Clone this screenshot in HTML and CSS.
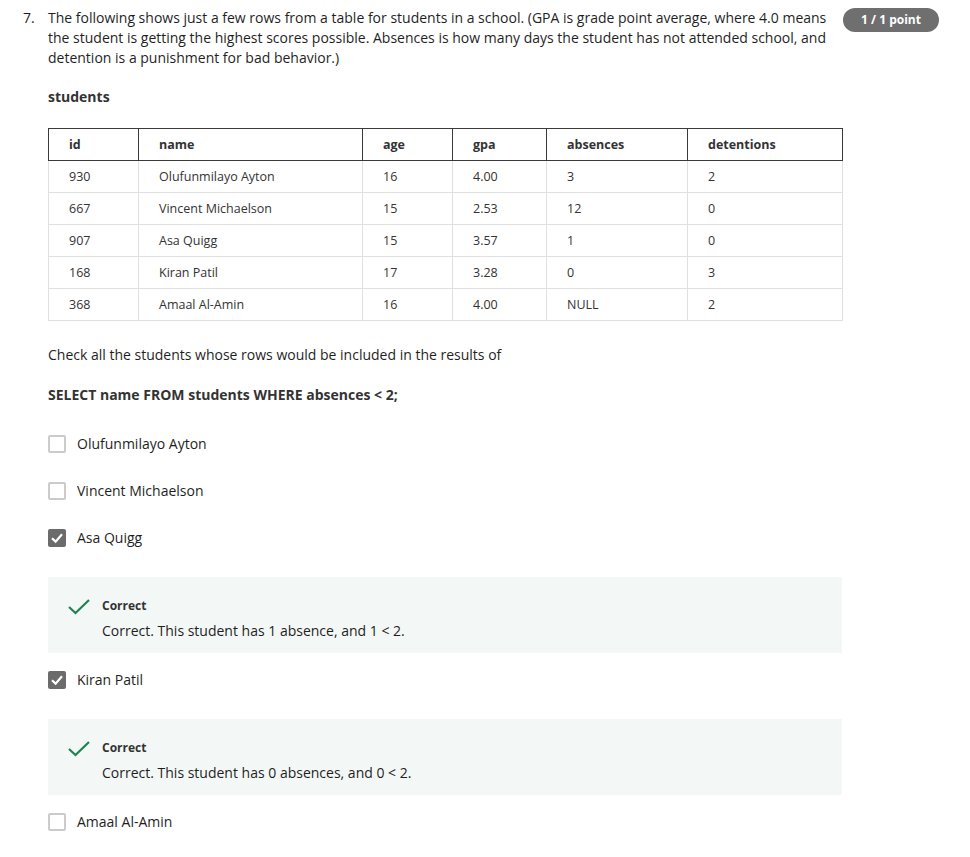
FILE: index.html
```html
<!DOCTYPE html>
<html lang="en">
<head>
<meta charset="utf-8">
<title>Question 7</title>
<link rel="stylesheet" href="styles.css">
</head>
<body>
<div class="page">
  <div class="num">7.</div>
  <div class="main">
    <p class="prompt">The following shows just a few rows from a table for students in a school. (GPA is grade point average, where 4.0 means the student is getting the highest scores possible. Absences is how many days the student has not attended school, and detention is a punishment for bad behavior.)</p>
    <p class="caption">students</p>
    <table class="data">
      <colgroup>
        <col class="c-id"><col class="c-name"><col class="c-age"><col class="c-gpa"><col class="c-abs"><col class="c-det">
      </colgroup>
      <thead>
        <tr><th>id</th><th>name</th><th>age</th><th>gpa</th><th>absences</th><th>detentions</th></tr>
      </thead>
      <tbody>
        <tr><td>930</td><td>Olufunmilayo Ayton</td><td>16</td><td>4.00</td><td>3</td><td>2</td></tr>
        <tr><td>667</td><td>Vincent Michaelson</td><td>15</td><td>2.53</td><td>12</td><td>0</td></tr>
        <tr><td>907</td><td>Asa Quigg</td><td>15</td><td>3.57</td><td>1</td><td>0</td></tr>
        <tr><td>168</td><td>Kiran Patil</td><td>17</td><td>3.28</td><td>0</td><td>3</td></tr>
        <tr><td>368</td><td>Amaal Al-Amin</td><td>16</td><td>4.00</td><td>NULL</td><td>2</td></tr>
      </tbody>
    </table>
    <p class="instr">Check all the students whose rows would be included in the results of</p>
    <p class="sql">SELECT name FROM students WHERE absences &lt; 2;</p>

    <div class="options">
      <div class="opt"><span class="box"></span><span>Olufunmilayo Ayton</span></div>
      <div class="opt"><span class="box"></span><span>Vincent Michaelson</span></div>
      <div class="opt"><span class="box checked"><svg viewBox="0 0 18 18" width="18" height="18"><polyline points="4,9.2 7.6,12.6 14,5.2" fill="none" stroke="#fff" stroke-width="2.2"/></svg></span><span>Asa Quigg</span></div>
      <div class="feedback">
        <svg class="tick" viewBox="0 0 22 16" width="22" height="16"><polyline points="1,8 7.5,14 21,1" fill="none" stroke="#1f8354" stroke-width="2.2"/></svg>
        <div class="fb-body">
          <div class="fb-title">Correct</div>
          <div class="fb-text">Correct. This student has 1 absence, and 1 &lt; 2.</div>
        </div>
      </div>
      <div class="opt after-fb"><span class="box checked"><svg viewBox="0 0 18 18" width="18" height="18"><polyline points="4,9.2 7.6,12.6 14,5.2" fill="none" stroke="#fff" stroke-width="2.2"/></svg></span><span>Kiran Patil</span></div>
      <div class="feedback">
        <svg class="tick" viewBox="0 0 22 16" width="22" height="16"><polyline points="1,8 7.5,14 21,1" fill="none" stroke="#1f8354" stroke-width="2.2"/></svg>
        <div class="fb-body">
          <div class="fb-title">Correct</div>
          <div class="fb-text">Correct. This student has 0 absences, and 0 &lt; 2.</div>
        </div>
      </div>
      <div class="opt after-fb"><span class="box"></span><span>Amaal Al-Amin</span></div>
    </div>
  </div>
  <div class="badge">1 / 1 point</div>
</div>
</body>
</html>
```

FILE: styles.css
```css
html, body {
  margin: 0;
  padding: 0;
  background: #fff;
}
body {
  font-family: "Open Sans", "Noto Sans", sans-serif;
  font-size: 14px;
  line-height: 20px;
  color: #1f1f1f;
}
.page {
  display: flex;
  align-items: flex-start;
  padding: 8px 0 0 23px;
}
.num {
  width: 25px;
  flex: none;
}
.main {
  width: 794px;
  flex: none;
}
.badge {
  flex: none;
  margin-left: 1px;
  width: 96px;
  height: 24px;
  line-height: 24px;
  border-radius: 12px;
  background: #6f6f6f;
  color: #fff;
  font-size: 12px;
  font-weight: 700;
  text-align: center;
}
p {
  margin: 0;
}
.caption {
  margin-top: 19px;
  font-weight: 700;
  color: #333;
}
.data {
  margin-top: 21px;
  width: 795px;
  border-collapse: collapse;
  table-layout: fixed;
  font-size: 12.5px;
  line-height: 17px;
  color: #333;
}
.c-id { width: 90px; }
.c-name { width: 224px; }
.c-age { width: 90px; }
.c-gpa { width: 94px; }
.c-abs { width: 141px; }
.c-det { width: 155px; }
.data th, .data td {
  padding: 7px 20px;
  text-align: left;
  white-space: nowrap;
}
.data th {
  border: 1px solid #3a3a3a;
  font-weight: 700;
}
.data td {
  border: 1px solid #e0e0e0;
}
.instr {
  margin-top: 24px;
}
.sql {
  margin-top: 20px;
  font-weight: 700;
  color: #333;
}
.options {
  margin-top: 29px;
  display: flex;
  flex-direction: column;
}
.opt {
  display: flex;
  align-items: center;
  gap: 11px;
  height: 20px;
}
.opt + .opt {
  margin-top: 27px;
}
.opt.after-fb {
  margin-top: 17px;
}
.box {
  width: 18px;
  height: 18px;
  box-sizing: border-box;
  border: 2px solid #cbcbcb;
  border-radius: 2px;
  flex: none;
  display: flex;
}
.box.checked {
  border: none;
  background: #6b6b6b;
}
.feedback {
  margin-top: 29px;
  background: #f3f8f6;
  display: flex;
  align-items: flex-start;
  gap: 12px;
  padding: 21px 20px 12px 20px;
}
.tick {
  flex: none;
  margin-top: 1px;
}
.fb-title {
  font-size: 12px;
  font-weight: 700;
  line-height: 16px;
  color: #333;
}
.fb-text {
  margin-top: 7px;
}
```
